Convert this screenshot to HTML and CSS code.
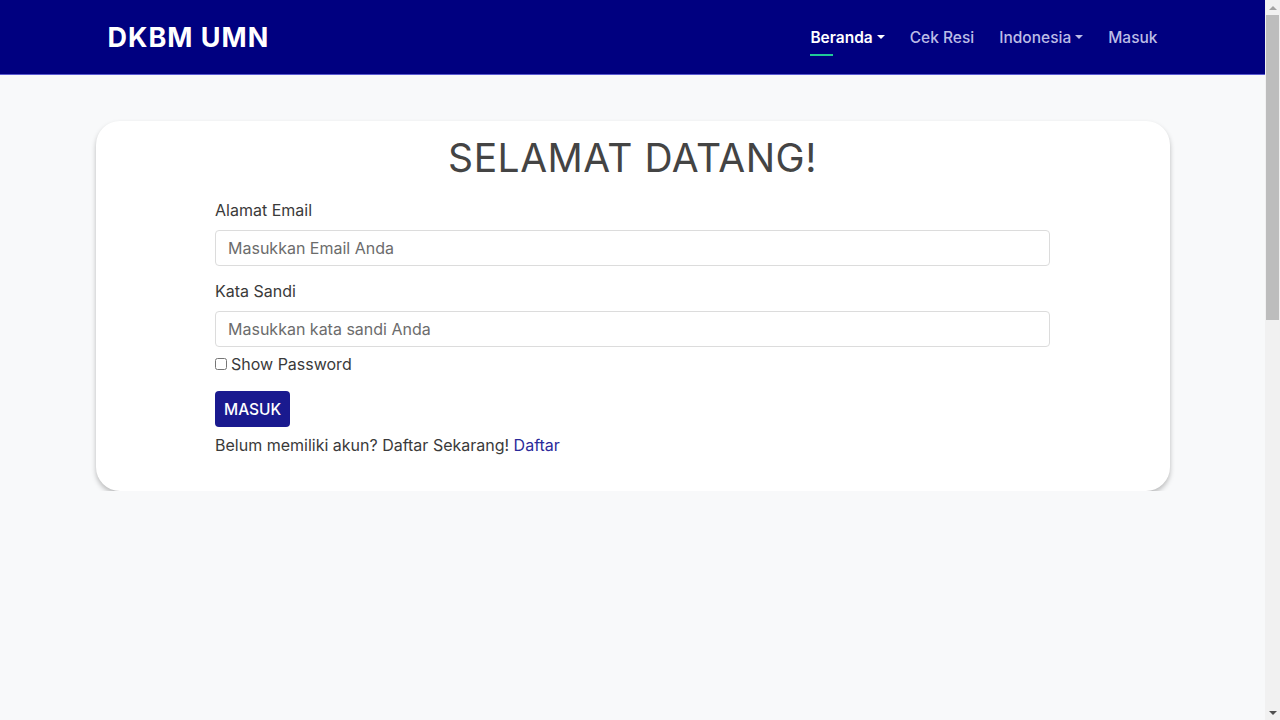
FILE: index.html
```html
<!DOCTYPE html>
<html lang="id">
<head>
<meta charset="utf-8">
<title>DKBM UMN</title>
<link rel="stylesheet" href="styles.css">
</head>
<body>
<header class="navbar">
  <div class="nav-inner">
    <a class="brand" href="#">DKBM UMN</a>
    <nav class="nav-links">
      <a class="nav-link active" href="#">Beranda <span class="caret"></span></a>
      <a class="nav-link" href="#">Cek Resi</a>
      <a class="nav-link" href="#">Indonesia <span class="caret"></span></a>
      <a class="nav-link" href="#">Masuk</a>
    </nav>
  </div>
</header>
<main class="main">
  <section class="card">
    <h1 class="title">SELAMAT DATANG!</h1>
    <form class="form">
      <label class="label" for="email">Alamat Email</label>
      <input class="input" id="email" type="text" placeholder="Masukkan Email Anda">
      <label class="label label-2" for="pw">Kata Sandi</label>
      <input class="input" id="pw" type="password" placeholder="Masukkan kata sandi Anda">
      <label class="check"><input type="checkbox" class="checkbox"> Show Password</label>
      <button class="btn" type="button">MASUK</button>
      <p class="register">Belum memiliki akun? Daftar Sekarang! <a href="#" class="link">Daftar</a></p>
    </form>
  </section>
</main>
<div class="scrollbar" aria-hidden="true">
  <div class="sb-btn sb-up"></div>
  <div class="sb-track"><div class="sb-thumb"></div></div>
  <div class="sb-btn sb-down"></div>
</div>
</body>
</html>
```
FILE: styles.css
```css
* { box-sizing: border-box; }
html, body { margin: 0; padding: 0; }
body {
  background: #f8f9fa;
  font-family: Inter, "Noto Sans", sans-serif;
  color: #444;
  padding-right: 15px;
}
.scrollbar {
  position: fixed;
  top: 0;
  right: 0;
  width: 15px;
  height: 100vh;
  background: #f1f1f1;
  display: flex;
  flex-direction: column;
}
.sb-btn {
  height: 15px;
  display: flex;
  align-items: center;
  justify-content: center;
}
.sb-up::before {
  content: "";
  border-left: 4px solid transparent;
  border-right: 4px solid transparent;
  border-bottom: 4px solid #a3a3a3;
}
.sb-down::before {
  content: "";
  border-left: 4px solid transparent;
  border-right: 4px solid transparent;
  border-top: 4px solid #505050;
}
.sb-track { flex: 1; padding: 0 1px; }
.sb-thumb { height: 305px; background: #bdbdbd; }
.navbar {
  background: #000080;
  height: 75px;
  border-bottom: 1px solid #5a5ad0;
}
.nav-inner {
  width: 1074px;
  margin: 0 auto;
  padding: 0 12px;
  height: 100%;
  display: flex;
  align-items: center;
  justify-content: space-between;
}
.brand {
  color: #fff;
  text-decoration: none;
  font-weight: 700;
  font-size: 27px;
  letter-spacing: 1px;
}
.nav-links {
  display: flex;
  gap: 25px;
  align-items: center;
}
.nav-link {
  color: #bcbce6;
  text-decoration: none;
  font-size: 15.5px;
  font-weight: 500;
  position: relative;
  display: flex;
  align-items: center;
  gap: 4px;
}
.nav-link.active { color: #fff; font-weight: 600; }
.nav-link.active::after {
  content: "";
  position: absolute;
  left: 0;
  bottom: -9px;
  width: 23px;
  height: 2px;
  background: #20c997;
}
.caret {
  display: inline-block;
  width: 0; height: 0;
  border-left: 4px solid transparent;
  border-right: 4px solid transparent;
  border-top: 4px solid currentColor;
}
.main {
  padding-top: 46px;
}
.card {
  width: 1074px;
  margin: 0 auto;
  background: #fff;
  border-radius: 24px;
  box-shadow: 0 3px 5px rgba(0,0,0,0.25);
  padding: 14px 0 35px;
}
.title {
  margin: 0;
  text-align: center;
  font-weight: 400;
  font-size: 39px;
  color: #444;
  letter-spacing: 0.5px;
  line-height: 46px;
}
.form {
  width: 835px;
  margin: 0 auto;
  padding-top: 19px;
  display: flex;
  flex-direction: column;
  align-items: flex-start;
}
.label {
  font-size: 16px;
  color: #3a3a3a;
  margin-bottom: 10px;
}
.label-2 { margin-top: 15px; }
.input {
  width: 100%;
  height: 36px;
  border: 1px solid #dcdcdc;
  border-radius: 4px;
  padding: 0 12px;
  font-family: inherit;
  font-size: 16px;
  color: #444;
}
.input::placeholder { color: #6c6c6c; }
.check {
  margin-top: 7px;
  font-size: 16px;
  color: #3a3a3a;
  display: flex;
  align-items: center;
  gap: 4px;
}
.checkbox { margin: 0; width: 12px; height: 12px; }
.btn {
  margin-top: 17px;
  background: #1a1a8f;
  color: #fff;
  border: none;
  border-radius: 4px;
  height: 36px;
  padding: 0 9px;
  font-family: inherit;
  font-size: 15.5px;
  font-weight: 500;
}
.register {
  margin: 7px 0 0;
  font-size: 16px;
  color: #3a3a3a;
  line-height: 22px;
}
.link { color: #2a2a9a; text-decoration: none; }
```
